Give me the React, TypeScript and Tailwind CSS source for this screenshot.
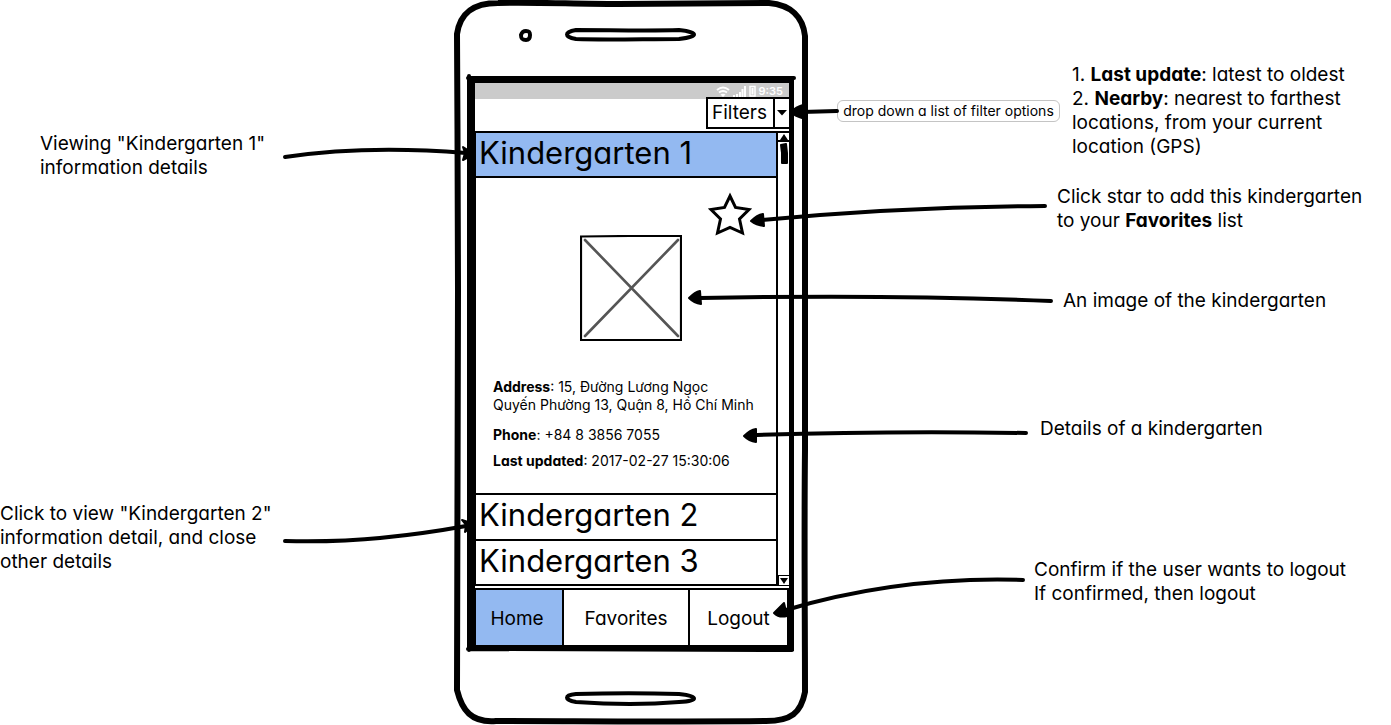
import { useState } from "react";
import type { ReactNode } from "react";

function Note({ className, children }: { className: string; children: ReactNode }) {
  return <p className={`text-[19px] leading-6 ${className}`}>{children}</p>;
}

function Arrow({ line, head }: { line: string; head: string }) {
  return (
    <g stroke="#000" strokeLinecap="round" strokeLinejoin="round">
      <path d={line} fill="none" strokeWidth="4" />
      <path d={head} fill="#000" strokeWidth="2" />
    </g>
  );
}

function Arrows() {
  return (
    <svg
      aria-hidden="true"
      viewBox="0 0 1391 725"
      className="pointer-events-none absolute top-0 -left-[454px] h-[725px] w-[1391px] max-w-none"
    >
      <Arrow line="M285 157C345 148 405 148 466 153" head="M474 154L463 147L465 153L463 160Z" />
      <Arrow line="M285 541C345 543 400 538 466 526" head="M474 524L462 520L466 525L465 532Z" />
      <Arrow line="M837 111L802 112" head="M791 112Q796 107 803 105L802 118Q795 116 791 112Z" />
      <Arrow line="M1045 206Q900 207 762 220" head="M751 221Q757 215 763 214L764 226Q756 225 751 221Z" />
      <Arrow line="M1051 301C930 296 810 296 700 298" head="M689 298Q695 292 700 291L701 304Q694 303 689 298Z" />
      <Arrow line="M1026 433Q880 431 757 435" head="M744 436Q750 430 756 429V442Q749 441 744 436Z" />
      <Arrow line="M1023 580Q900 576 786 610" head="M774 613L784 603L787 616Q779 618 774 613Z" />
    </svg>
  );
}

function Bezel() {
  return (
    <svg
      aria-hidden="true"
      viewBox="0 0 354 725"
      className="pointer-events-none absolute top-0 left-0 h-[725px] w-[354px]"
      fill="none"
      stroke="#000"
      strokeLinejoin="round"
    >
      <path
        strokeWidth="6"
        d="M3 34C6 14 18 3 44 3C80 2 120 4 164 4C210 4 270 3 315 3C337 5 349 17 351 36C350 150 351 300 351 450C350 540 351 620 351 692C347 713 337 721 312 721C250 722 110 721 42 721C17 723 8 710 3 690C4 560 3 420 4 290C3 200 4 120 3 34Z"
      />
      <path strokeWidth="4" d="M72 31C69 31 68 32 67 35C67 39 68 40 72 40C75 40 76 38 76 35C76 32 75 31 72 31Z" />
      <path strokeWidth="4" d="M122 30C155 30 195 31 225 30C245 32 245 37 225 39C190 39 150 40 122 39C110 37 110 32 122 30Z" />
      <path strokeWidth="4" d="M122 694C155 693 195 693 225 694C245 696 245 701 225 702C190 705 150 704 122 702C110 700 110 695 122 694Z" />
      <path strokeWidth="4" strokeLinecap="round" d="M15 76V650M14 78H340M14 649L338 650" />
    </svg>
  );
}

function StatusBar() {
  return (
    <div className="flex h-4 items-center justify-end gap-[3px] bg-[#cbcbcb] pr-1.5 text-white">
      <svg aria-hidden="true" viewBox="0 0 14 11" className="h-[11px] w-3.5" fill="none" stroke="#fff" strokeWidth="2">
        <path d="M1 4Q7-1 13 4M3 6.500Q7 3.500 11 6.500" />
        <path d="M4.500 8.500Q7 7 9.500 8.500L7 11Z" fill="#fff" stroke="none" />
      </svg>
      <svg aria-hidden="true" viewBox="0 0 13 11" className="h-[11px] w-[13px]" fill="#fff">
        <path d="M0 9h2v2H0zM3 8h2v3H3zM6 6h2v5H6zM8.500 3h2v8h-2zM11 0h2v11h-2z" />
      </svg>
      <svg aria-hidden="true" viewBox="0 0 7 12" className="h-3 w-[7px]" fill="none" stroke="#fff">
        <path d="M1 1.500H6V11H1Z" strokeWidth="1.500" />
        <path d="M3.500 3V9.500" strokeWidth="2" />
      </svg>
      <span className="text-[11px] leading-4 font-semibold">9:35</span>
    </div>
  );
}

function FilterMenu() {
  return (
    <div className="relative -mt-0.5 -mr-0.5 flex justify-end">
      <label className="flex h-8 w-[85px] border-2 border-black bg-white">
        <select aria-label="Filters" className="w-[65px] appearance-none bg-transparent pl-1 text-[19px] leading-7 outline-none">
          <option>Filters</option>
          <option>Last update</option>
          <option>Nearby</option>
        </select>
        <span className="flex flex-1 items-center justify-center border-l-2 border-black">
          <svg aria-hidden="true" viewBox="0 0 10 6" className="h-1.5 w-2.5">
            <path d="M0 0H10L5 5.500Z" />
          </svg>
        </span>
      </label>
    </div>
  );
}

function Details() {
  const [starred, setStarred] = useState(false);
  return (
    <div className="flex h-[315px] flex-col border-l border-black pt-3.5 text-sm leading-[18px]">
      <button
        type="button"
        aria-label="Add to favorites"
        aria-pressed={starred}
        onClick={() => setStarred(!starred)}
        className="mr-[23px] self-end"
      >
        <svg aria-hidden="true" viewBox="0 0 46 44" className="h-11 w-[46px]" stroke="#000" strokeWidth="3">
          <path
            fill={starred ? "#000" : "none"}
            d="M23 4L28.500 15.500L42 17.500L32.500 27L35.500 41L23 35.500L10.500 41L13.500 27L4 17.500L17.500 15.500Z"
          />
        </svg>
      </button>
      <svg role="img" aria-label="Kindergarten" viewBox="0 0 102 106" className="-mt-px ml-[104px] h-[106px] w-[102px]" fill="none">
        <path d="M1 1.500L50 1H101V105H1Z" stroke="#000" strokeWidth="2.200" />
        <path d="M5 5L98 101M98 5L5 101" stroke="#555" strokeWidth="2.600" strokeLinecap="round" />
      </svg>
      <div className="mt-[37px] pl-[17px]">
        <p>
          <b>Address</b>: 15, Đường Lương Ngọc
          <br />
          Quyến Phường 13, Quận 8, Hồ Chí Minh
        </p>
        <p className="mt-3">
          <b>Phone</b>: +84 8 3856 7055
        </p>
        <p className="mt-2">
          <b>Last updated</b>: 2017-02-27 15:30:06
        </p>
      </div>
    </div>
  );
}

function Scrollbar() {
  return (
    <div className="relative -mr-0.5 flex flex-1 flex-col items-center bg-white">
      <div className="flex h-[11px] w-full items-center justify-center border-y-2 border-r-2 border-black">
        <svg aria-hidden="true" viewBox="0 0 8 6" className="h-1.5 w-2">
          <path d="M4 0L8 6H0Z" />
        </svg>
      </div>
      <div className="flex w-full flex-1 justify-center border-r-2 border-black pt-px">
        <svg aria-hidden="true" viewBox="0 0 8 21" className="h-[21px] w-2">
          <path d="M1 2L6 1L7 10V20L2 20L2 10Z" stroke="#000" strokeWidth="2" strokeLinejoin="round" />
        </svg>
      </div>
      <div className="flex h-[11px] w-full items-center justify-center border border-r-2 border-black">
        <svg aria-hidden="true" viewBox="0 0 8 6" className="h-1.5 w-2">
          <path d="M0 0H8L4 6Z" />
        </svg>
      </div>
    </div>
  );
}

function Phone() {
  return (
    <section className="relative h-[725px] pt-[76px] pl-3.5">
      <Bezel />
      <div className="w-[326px] border-t-[7px] border-r-[5px] border-b-[6px] border-l-[7px] border-black bg-white">
        <StatusBar />
        <FilterMenu />
        <div className="mt-0.5 flex">
          <div className="w-[303px] border-r-2 border-black">
            <button
              type="button"
              aria-expanded="true"
              className="block h-[47px] w-full border-y-2 border-l border-black bg-[#93b9f1] pb-1 pl-[3px] text-left text-[31px] leading-9"
            >
              Kindergarten 1
            </button>
            <Details />
            <button
              type="button"
              className="block h-[46px] w-full border-t-2 border-l border-black pb-1 pl-[3px] text-left text-[31px] leading-9"
            >
              Kindergarten 2
            </button>
            <button
              type="button"
              className="block h-[47px] w-full border-y-2 border-l border-black pb-1 pl-[3px] text-left text-[31px] leading-9"
            >
              Kindergarten 3
            </button>
          </div>
          <Scrollbar />
        </div>
        <nav className="mt-0.5 flex h-[57px] border-t-2 border-r-2 border-black text-[19px]">
          <button type="button" className="w-[89px] border-r-2 border-l border-black bg-[#93b9f1] pt-1 pr-1">
            Home
          </button>
          <button type="button" className="w-[126px] border-r-2 border-black pt-1">
            Favorites
          </button>
          <button type="button" className="flex-1 pt-1">
            Logout
          </button>
        </nav>
      </div>
      <Arrows />
    </section>
  );
}

export default function App() {
  return (
    <main className="grid grid-cols-[454fr_354px_583fr] overflow-hidden bg-white font-['Inter','Noto_Sans',sans-serif] text-black [font-feature-settings:'cv11']">
      <aside className="flex flex-col items-end pt-[132px] pr-[170px]">
        <Note className="w-[244px]">
          Viewing "Kindergarten 1"
          <br />
          information details
        </Note>
        <Note className="mt-[322px] w-[284px]">
          Click to view "Kindergarten 2"
          <br />
          information detail, and close
          <br />
          other details
        </Note>
      </aside>
      <Phone />
      <aside className="flex flex-col pt-[63px] whitespace-nowrap">
        <div className="flex items-center gap-3 pl-[29px]">
          <span className="flex h-[22px] w-[223px] items-center justify-center rounded-md border border-[#c4c4c4] text-sm">
            drop down a list of filter options
          </span>
          <Note className="">
            1. <b>Last update</b>: latest to oldest
            <br />
            2. <b>Nearby</b>: nearest to farthest
            <br />
            locations, from your current
            <br />
            location (GPS)
          </Note>
        </div>
        <Note className="mt-[26px] pl-[249px]">
          Click star to add this kindergarten
          <br />
          to your <b>Favorites</b> list
        </Note>
        <Note className="mt-14 pl-[255px]">An image of the kindergarten</Note>
        <Note className="mt-[104px] pl-[232px]">Details of a kindergarten</Note>
        <Note className="mt-[117px] pl-[226px]">
          Confirm if the user wants to logout
          <br />
          If confirmed, then logout
        </Note>
      </aside>
    </main>
  );
}
